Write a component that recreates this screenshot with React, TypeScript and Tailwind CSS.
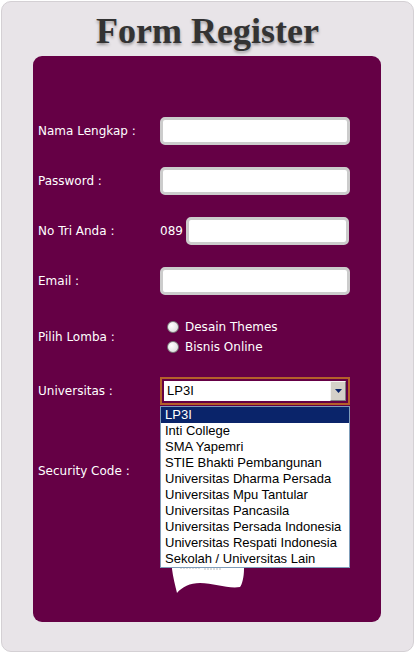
import React from 'react';

const universitas = [
  'LP3I',
  'Inti College',
  'SMA Yapemri',
  'STIE Bhakti Pembangunan',
  'Universitas Dharma Persada',
  'Universitas Mpu Tantular',
  'Universitas Pancasila',
  'Universitas Persada Indonesia',
  'Universitas Respati Indonesia',
  'Sekolah / Universitas Lain',
];

const labelCls =
  'w-[122px] shrink-0 text-[12px] leading-[20px] text-white [font-family:"DejaVu_Sans",Verdana,sans-serif]';
const inputCls =
  'h-[28px] rounded-[5px] border-[3px] border-[#cccccc] bg-white outline-none';

function Radio({ label }: { label: string }) {
  return (
    <div className="flex h-[20px] items-center">
      <span className="ml-[7px] mr-[6px] h-[12px] w-[12px] rounded-full border border-[#7a7a7a] bg-[radial-gradient(circle_at_35%_35%,#ffffff,#d8d8d8)]" />
      <span className="text-[12px] text-white [font-family:'DejaVu_Sans',Verdana,sans-serif]">
        {label}
      </span>
    </div>
  );
}

export default function App() {
  return (
    <div className="h-[654px] w-[415px] bg-white p-[1px]">
      <div className="relative h-[651px] w-[413px] rounded-[10px] border border-[#d4d0d4] bg-[#e8e4e8]">
        {/* judul */}
        <h1 className="pt-[7px] text-center text-[36px] font-bold leading-[44px] text-[#333333] [font-family:'Liberation_Serif',Georgia,serif] [text-shadow:0_2px_3px_rgba(0,0,0,0.35)]">
          Form Register
        </h1>

        {/* panel form */}
        <div className="relative ml-[31px] mt-[3px] h-[566px] w-[348px] rounded-[9px] bg-[#650045] pl-[5px] pt-[61px]">
          <div className="flex h-[28px] items-center">
            <span className={labelCls}>Nama Lengkap :</span>
            <input className={`${inputCls} w-[190px]`} />
          </div>

          <div className="mt-[22px] flex h-[28px] items-center">
            <span className={labelCls}>Password :</span>
            <input type="password" className={`${inputCls} w-[190px]`} />
          </div>

          <div className="mt-[22px] flex h-[28px] items-center">
            <span className={labelCls}>No Tri Anda :</span>
            <span className="w-[26px] text-[12px] text-white [font-family:'DejaVu_Sans',Verdana,sans-serif]">
              089
            </span>
            <input className={`${inputCls} w-[163px]`} />
          </div>

          <div className="mt-[22px] flex h-[28px] items-center">
            <span className={labelCls}>Email :</span>
            <input className={`${inputCls} w-[190px]`} />
          </div>

          <div className="mt-[22px] flex h-[40px] items-center">
            <span className={labelCls}>Pilih Lomba :</span>
            <div className="flex flex-col">
              <Radio label="Desain Themes" />
              <Radio label="Bisnis Online" />
            </div>
          </div>

          <div className="relative mt-[20px] flex h-[28px] items-center">
            <span className={labelCls}>Universitas :</span>
            <div className="flex h-[28px] w-[190px] items-center border-2 border-[#b4602a] bg-[#650045] p-[2px]">
              <div className="flex h-full w-full items-center bg-white">
                <span className="flex-1 pl-[3px] text-[13px] text-black [font-family:'Liberation_Sans',Arial,sans-serif]">
                  LP3I
                </span>
                <span className="flex h-full w-[16px] items-center justify-center border border-[#f4f4f4] border-b-[#808080] border-r-[#808080] bg-[#d4d0c8]">
                  <svg width="7" height="4" viewBox="0 0 7 4">
                    <path d="M0 0h7L3.5 4z" fill="#0a246a" />
                  </svg>
                </span>
              </div>
            </div>

            {/* daftar pilihan terbuka */}
            <ul className="absolute left-[122px] top-[29px] z-10 w-[190px] border border-[#7f9db9] bg-white text-[13px] leading-[16px] text-black [font-family:'Liberation_Sans',Arial,sans-serif]">
              {universitas.map((u, i) => (
                <li
                  key={u}
                  className={
                    i === 0 ? 'bg-[#0a246a] pl-[4px] text-white' : 'pl-[4px]'
                  }
                >
                  {u}
                </li>
              ))}
            </ul>
          </div>

          <div className="mt-[56px] flex items-start">
            <span className={labelCls}>Security Code :</span>
            <svg width="80" height="132" viewBox="0 0 80 132" className="ml-[10px]">
              <path
                d="M2 0 H74 V108 C74 116 72 124 70 126 C58 128 44 122 30 122 C20 122 12 126 7 132 C5 124 3 116 2 108 Z"
                fill="#ffffff"
              />
              <path d="M10 107 h20 M34 108 h18" stroke="#bbbbbb" strokeWidth="1" strokeDasharray="2 1" />
            </svg>
          </div>
        </div>
      </div>
    </div>
  );
}
